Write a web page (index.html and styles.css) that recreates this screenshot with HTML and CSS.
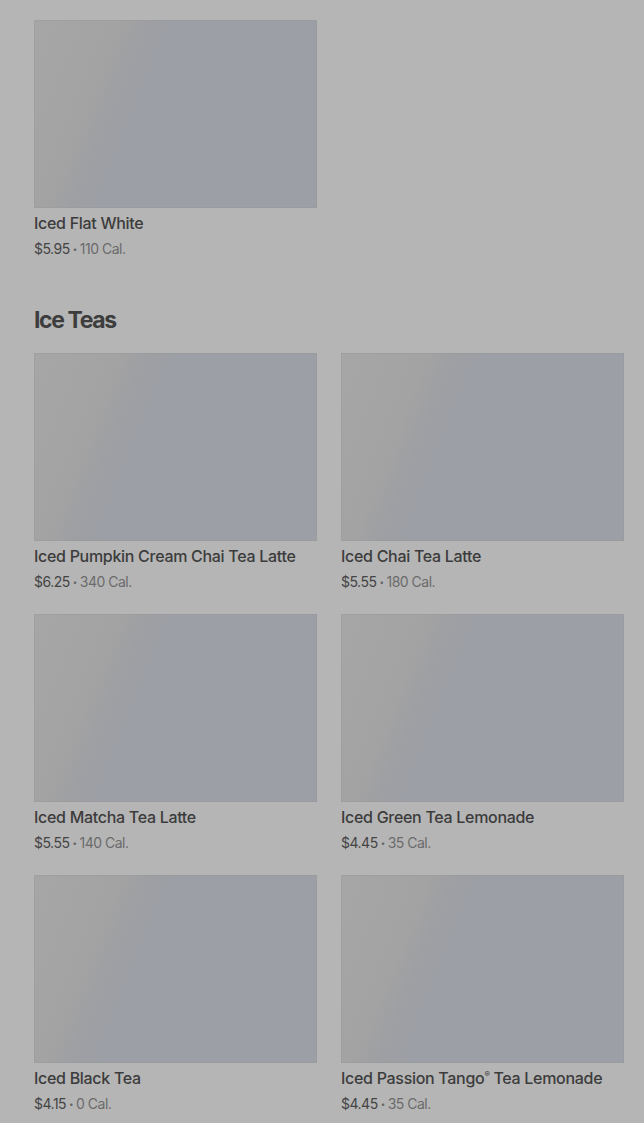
FILE: index.html
```html
<!DOCTYPE html>
<html lang="en">
<head>
    <meta charset="UTF-8">
    <meta name="viewport" content="width=device-width, initial-scale=1.0">
    <title>Menu</title>
    <link rel="stylesheet" href="styles.css">
</head>
<body>
    <div class="menu">
        <section class="section">
            <div class="grid">
                <div class="item">
                    <div class="thumb"></div>
                    <div class="name">Iced Flat White</div>
                    <div class="meta"><span class="price">$5.95</span><span class="dot">•</span><span class="cal">110 Cal.</span></div>
                </div>
            </div>
        </section>

        <section class="section">
            <h2>Ice Teas</h2>
            <div class="grid">
                <div class="item">
                    <div class="thumb"></div>
                    <div class="name">Iced Pumpkin Cream Chai Tea Latte</div>
                    <div class="meta"><span class="price">$6.25</span><span class="dot">•</span><span class="cal">340 Cal.</span></div>
                </div>
                <div class="item">
                    <div class="thumb"></div>
                    <div class="name">Iced Chai Tea Latte</div>
                    <div class="meta"><span class="price">$5.55</span><span class="dot">•</span><span class="cal">180 Cal.</span></div>
                </div>
                <div class="item">
                    <div class="thumb"></div>
                    <div class="name">Iced Matcha Tea Latte</div>
                    <div class="meta"><span class="price">$5.55</span><span class="dot">•</span><span class="cal">140 Cal.</span></div>
                </div>
                <div class="item">
                    <div class="thumb"></div>
                    <div class="name">Iced Green Tea Lemonade</div>
                    <div class="meta"><span class="price">$4.45</span><span class="dot">•</span><span class="cal">35 Cal.</span></div>
                </div>
                <div class="item">
                    <div class="thumb"></div>
                    <div class="name">Iced Black Tea</div>
                    <div class="meta"><span class="price">$4.15</span><span class="dot">•</span><span class="cal">0 Cal.</span></div>
                </div>
                <div class="item">
                    <div class="thumb"></div>
                    <div class="name">Iced Passion Tango<sup>®</sup> Tea Lemonade</div>
                    <div class="meta"><span class="price">$4.45</span><span class="dot">•</span><span class="cal">35 Cal.</span></div>
                </div>
            </div>
        </section>
    </div>
</body>
</html>
```

FILE: styles.css
```css
body {
    margin: 0;
    font-family: Inter, "Noto Sans", sans-serif;
    background-color: #b5b5b5;
    color: #3b3b3b;
}

.menu {
    padding: 20px 20px 0 34px;
}

.section {
    margin-bottom: 45px;
}

h2 {
    font-size: 23px;
    font-weight: 700;
    letter-spacing: -1.4px;
    line-height: 32px;
    margin: 0 0 17px;
    color: #3d3d3d;
}

.grid {
    display: grid;
    grid-template-columns: 283px 283px;
    column-gap: 24px;
    row-gap: 22px;
}

.thumb {
    height: 188px;
    background: linear-gradient(112deg, #a6a6a6 0%, #a3a3a3 24%, #9e9fa3 32%, #9c9fa5 40%, #9c9fa5 100%);
    box-shadow: inset 0 0 0 1px rgba(150, 150, 150, 0.35);
}

.name {
    font-size: 16px;
    font-weight: 500;
    line-height: 20px;
    margin-top: 5px;
    letter-spacing: -0.3px;
    color: #3c3c3c;
}

.name sup {
    font-size: 8px;
    line-height: 0;
    vertical-align: 7px;
}

.meta {
    font-size: 14px;
    line-height: 20px;
    margin-top: 6px;
    letter-spacing: -0.5px;
}

.price {
    color: #444;
}

.dot {
    font-size: 8px;
    color: #666;
    vertical-align: 2px;
    margin: 0 3px;
}

.cal {
    color: #6b6b6b;
}
```
